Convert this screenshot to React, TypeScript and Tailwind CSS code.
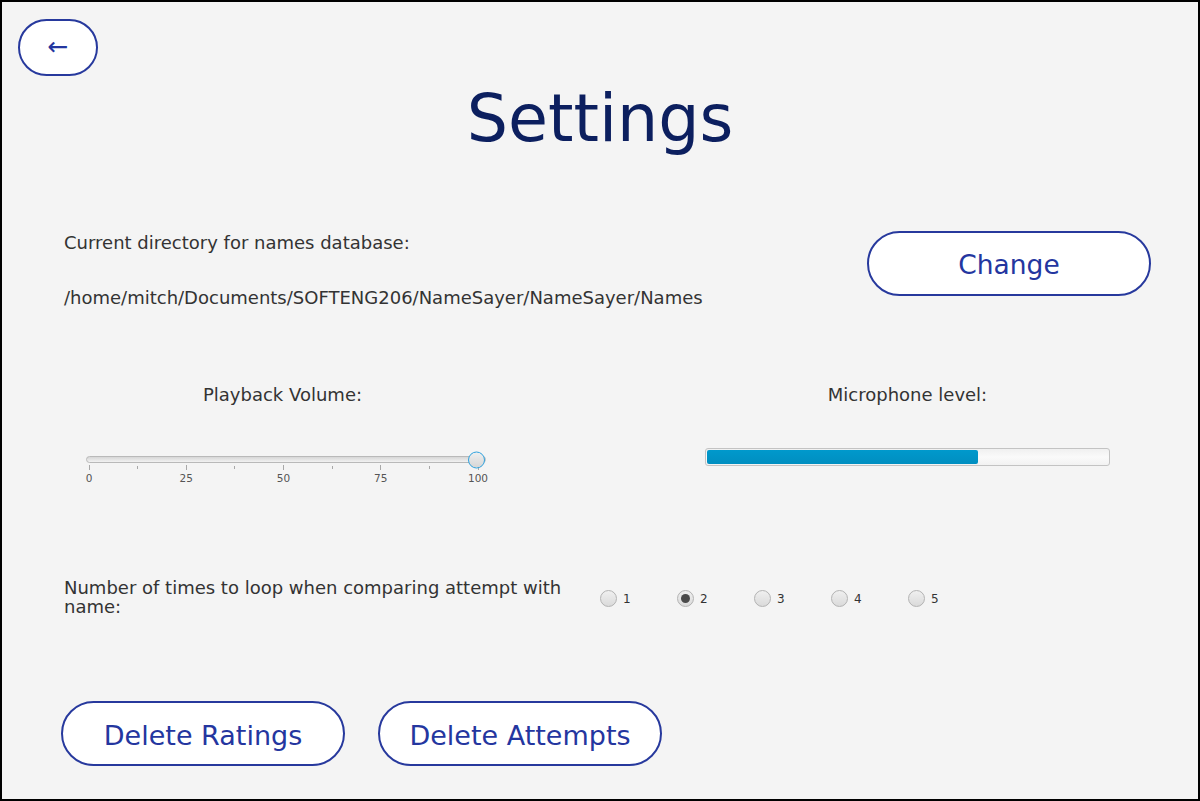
import React from "react";

const FONT = { fontFamily: '"DejaVu Sans", "Liberation Sans", sans-serif' };

function PillButton({ label, className }: { label: string; className?: string }) {
  return (
    <button
      type="button"
      className={[
        "flex items-center justify-center rounded-full border-2 border-[#27399d] bg-white leading-none text-[#24369f]",
        className ?? "",
      ].join(" ")}
    >
      {label}
    </button>
  );
}

function VolumeSlider() {
  const labels = ["0", "25", "50", "75", "100"];
  return (
    <div className="flex w-[400px] flex-col">
      <div className="relative h-[7px] w-[400px] rounded-full border border-[#b9b9b9] bg-gradient-to-b from-[#d6d6d6] to-[#f2f2f2]">
        <div className="absolute right-0 top-1/2 h-[17px] w-[17px] -translate-y-1/2 rounded-full border-[1.5px] border-[#2fa2de] bg-gradient-to-b from-[#efefef] to-[#d6d6d6]" />
      </div>
      <div className="ml-[2.5px] mt-[2px] flex w-[390px] items-start justify-between">
        {Array.from({ length: 9 }).map((_, i) => (
          <span
            key={i}
            className={["w-px bg-[#a8a8a8]", i % 2 === 0 ? "h-[5px]" : "mt-[1px] h-[3px]"].join(" ")}
          />
        ))}
      </div>
      <div className="-ml-[17px] mt-[2px] flex w-[429px] justify-between text-[10.5px] leading-[12px] text-[#555]">
        {labels.map((l) => (
          <span key={l} className="w-[40px] text-center">
            {l}
          </span>
        ))}
      </div>
    </div>
  );
}

function MicLevel({ value }: { value: number }) {
  return (
    <div className="h-[18px] w-[405px] rounded-[3px] border border-[#c3c3c3] bg-gradient-to-b from-[#f0f0f0] via-[#fafafa] to-[#f2f2f2] p-[1px]">
      <div
        className="h-full rounded-[2px] bg-gradient-to-b from-[#0099cc] to-[#008ec0]"
        style={{ width: `${value}%` }}
      />
    </div>
  );
}

function Radio({ label, checked }: { label: string; checked?: boolean }) {
  return (
    <div className="flex w-[77px] items-center gap-[6px]">
      <span className="flex h-[17px] w-[17px] items-center justify-center rounded-full border border-[#b3b3b3] bg-gradient-to-b from-[#f0f0f0] to-[#dadada]">
        {checked && <span className="h-[9px] w-[9px] rounded-full bg-[#4a4a4a]" />}
      </span>
      <span className="text-[12px] leading-none text-[#333]">{label}</span>
    </div>
  );
}

export default function App() {
  return (
    <div
      style={FONT}
      className="flex h-[801px] w-[1200px] flex-col overflow-hidden border-2 border-black bg-[#f4f4f4] text-[#333]"
    >
      <div className="ml-[16px] mt-[17px]">
        <PillButton label="←" className="h-[57px] w-[80px] pb-[2px] text-[25px]" />
      </div>

      <h1 className="mt-[10px] text-center text-[65px] font-normal leading-none text-[#0c1f5f]">Settings</h1>

      <div className="mt-[80px] flex items-start justify-between pl-[62px] pr-[47px]">
        <div className="flex flex-col pt-[3px] text-[18px] leading-[18px]">
          <span>Current directory for names database:</span>
          <span className="mt-[37px]">/home/mitch/Documents/SOFTENG206/NameSayer/NameSayer/Names</span>
        </div>
        <PillButton label="Change" className="h-[65px] w-[284px] pt-[3px] text-[26.5px]" />
      </div>

      <div className="mt-[79px] flex h-[100px] items-start pl-[84px]">
        <div className="flex w-[400px] flex-col items-center">
          <span className="pr-[7px] text-[18px] leading-[18px]">Playback Volume:</span>
          <div className="mt-[52px]">
            <VolumeSlider />
          </div>
        </div>
        <div className="ml-[219px] flex w-[405px] flex-col items-center">
          <span className="text-[18px] leading-[18px]">Microphone level:</span>
          <div className="mt-[44px]">
            <MicLevel value={67.5} />
          </div>
        </div>
      </div>

      <div className="mt-[92px] flex items-start pl-[62px]">
        <p className="w-[520px] text-[18px] leading-[19px]">
          Number of times to loop when comparing attempt with name:
        </p>
        <div className="ml-[16px] mt-[12px] flex">
          <Radio label="1" />
          <Radio label="2" checked />
          <Radio label="3" />
          <Radio label="4" />
          <Radio label="5" />
        </div>
      </div>

      <div className="mt-[85px] flex gap-[33px] pl-[59px]">
        <PillButton label="Delete Ratings" className="h-[65px] w-[284px] pt-[3px] text-[27px]" />
        <PillButton label="Delete Attempts" className="h-[65px] w-[284px] pt-[3px] text-[27px]" />
      </div>
    </div>
  );
}
